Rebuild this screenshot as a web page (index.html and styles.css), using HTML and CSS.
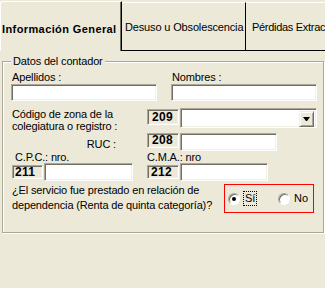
FILE: index.html
```html
<!DOCTYPE html>
<html lang="es">
<head>
    <meta charset="UTF-8">
    <title>Datos del contador</title>
    <link rel="stylesheet" href="styles.css">
</head>
<body>
    <div class="tabs">
        <div class="tab active">Información General</div>
        <div class="tab tab-desuso">Desuso u Obsolescencia</div>
        <div class="tab tab-perdidas">Pérdidas Extrac</div>
    </div>

    <div class="group">
        <span class="legend">Datos del contador</span>

        <div class="row row-names">
            <div class="field">
                <label>Apellidos :</label>
                <div class="input w-name"></div>
            </div>
            <div class="field">
                <label>Nombres :</label>
                <div class="input w-name"></div>
            </div>
        </div>

        <div class="row row-zona">
            <div class="label-col">Código de zona de la<br>colegiatura o registro :</div>
            <div class="code code-zona">209</div>
            <div class="select"><span class="arrow"></span></div>
        </div>

        <div class="row row-ruc">
            <div class="label-col label-ruc">RUC :</div>
            <div class="code code-ruc">208</div>
            <div class="input w-ruc"></div>
        </div>

        <div class="row row-sub">
            <span class="sub-cpc">C.P.C.: nro.</span>
            <span>C.M.A.: nro</span>
        </div>

        <div class="row row-nro">
            <div class="code code-nro code-cpc">211</div>
            <div class="input w-cpc"></div>
            <div class="code code-nro code-cma">212</div>
            <div class="input w-cma"></div>
        </div>

        <div class="row row-question">
            <div class="question">¿El servicio fue prestado en relación de<br>dependencia (Renta de quinta categoría)?</div>
            <div class="choice">
                <span class="radio checked"></span>
                <span class="option focus">Sí</span>
                <span class="radio radio-no"></span>
                <span class="option">No</span>
            </div>
        </div>
    </div>
</body>
</html>
```

FILE: styles.css
```css
body {
    margin: 0;
    width: 325px;
    height: 288px;
    overflow: hidden;
    background: #ECE9D8;
    font-family: "Liberation Sans", Arial, sans-serif;
    font-size: 11px;
    letter-spacing: -0.15px;
    color: #000;
}

/* pestañas */
.tabs {
    display: flex;
    height: 51px;
    white-space: nowrap;
}

.tab {
    flex: none;
    box-sizing: border-box;
    display: flex;
    align-items: center;
    margin-top: 2px;
    height: 49px;
    border-top: 1px solid #fff;
    border-right: 1px solid #000;
    border-bottom: 1px solid #000;
}

.tab.active {
    width: 122px;
    height: 50px;
    margin-top: 1px;
    padding: 4px 0 0 1px;
    border-left: 1px solid #fff;
    border-bottom: none;
    border-top-left-radius: 3px;
    box-shadow: inset -1px 0 0 #716F64;
    font-weight: bold;
    letter-spacing: 0.4px;
}

.tab-desuso {
    width: 124px;
    padding-left: 3px;
}

.tab-perdidas {
    width: 79px;
    padding-left: 6px;
    border-right: none;
    letter-spacing: -0.3px;
}

/* grupo */
.group {
    position: relative;
    box-sizing: border-box;
    width: 322px;
    height: 172px;
    margin: 10px 0 0 2px;
    padding: 9px 0 0 8px;
    border: 1px solid #ACA899;
    box-shadow: inset 1px 1px 0 #fff, 1px 1px 0 #fff;
}

.legend {
    position: absolute;
    top: -7px;
    left: 8px;
    padding: 0 2px;
    line-height: 13px;
    background: #ECE9D8;
}

.row {
    display: flex;
    align-items: flex-start;
}

.input, .code, .select {
    box-sizing: border-box;
    flex: none;
    border: 1px solid;
    border-color: #ACA899 #fff #fff #ACA899;
    box-shadow: inset 1px 1px 0 #716F64, inset -1px -1px 0 #F1EFE2;
}

.input {
    height: 18px;
    background: #fff;
}

.code {
    width: 32px;
    padding-left: 4px;
    font-size: 12px;
    font-weight: bold;
    letter-spacing: 0.3px;
}

.row-names {
    gap: 14px;
}

.field label {
    display: block;
    padding-left: 1px;
    line-height: 13px;
}

.w-name {
    width: 146px;
    height: 17px;
}

.row-zona {
    margin-top: 7px;
}

.label-col {
    box-sizing: border-box;
    width: 136px;
    padding-left: 1px;
    line-height: 12px;
}

.code-zona {
    height: 16px;
    margin-top: 1px;
    line-height: 14px;
}

.select {
    display: flex;
    justify-content: flex-end;
    width: 137px;
    height: 20px;
    margin-left: 1px;
    padding: 2px;
    background: #fff;
}

.arrow {
    box-sizing: border-box;
    display: flex;
    align-items: center;
    justify-content: center;
    width: 15px;
    height: 16px;
    background: #ECE9D8;
    border: 1px solid;
    border-color: #F1EFE2 #716F64 #716F64 #F1EFE2;
    box-shadow: inset 1px 1px 0 #fff, inset -1px -1px 0 #ACA899;
}

.arrow::after {
    content: "";
    width: 1px;
    border-left: 3px solid transparent;
    border-right: 3px solid transparent;
    border-top: 4px solid #000;
}

.row-ruc {
    margin-top: 1px;
}

.label-ruc {
    padding: 5px 31px 0 0;
    text-align: right;
    line-height: 13px;
}

.code-ruc {
    height: 15px;
    line-height: 13px;
}

.w-ruc {
    width: 97px;
    margin-left: 1px;
}

.row-sub {
    margin-top: 1px;
    line-height: 11px;
}

.sub-cpc {
    box-sizing: border-box;
    width: 136px;
    padding-left: 4px;
}

.code-nro {
    height: 14px;
    margin-top: 2px;
    line-height: 12px;
}

.code-cpc {
    width: 31px;
    margin-left: 1px;
    padding-left: 2px;
}

.w-cpc {
    width: 89px;
    margin-left: 1px;
}

.code-cma {
    margin-left: 14px;
    padding-left: 3px;
}

.w-cma {
    width: 88px;
    margin-left: 1px;
}

.row-question {
    margin-top: 2px;
}

.question {
    box-sizing: border-box;
    width: 213px;
    padding-left: 1px;
    line-height: 15px;
}

.choice {
    box-sizing: border-box;
    display: flex;
    align-items: center;
    width: 90px;
    height: 29px;
    margin-top: 1px;
    padding-left: 3px;
    border: 1px solid #FF0000;
}

.radio {
    box-sizing: border-box;
    display: flex;
    align-items: center;
    justify-content: center;
    width: 12px;
    height: 12px;
    border-radius: 50%;
    border: 1px solid;
    border-color: #ACA899 #fff #fff #ACA899;
    box-shadow: inset 1px 1px 0 #716F64;
    background: #fff;
}

.radio.checked::after {
    content: "";
    width: 4px;
    height: 4px;
    border-radius: 50%;
    background: #000;
}

.option {
    margin-left: 4px;
    line-height: 13px;
}

.option.focus {
    margin-left: 3px;
    padding: 0 1px;
    border: 1px dotted #000;
}

.radio-no {
    margin-left: 21px;
}
```
